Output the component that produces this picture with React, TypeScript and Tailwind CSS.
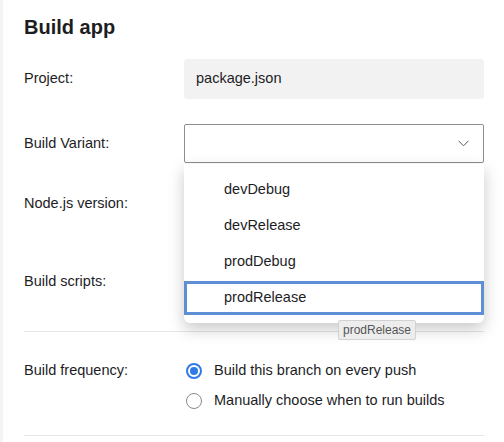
const variants = ["devDebug", "devRelease", "prodDebug", "prodRelease"];

function Row({ label, children, className }: { label: string; children?: React.ReactNode; className?: string }) {
  return (
    <div className={`flex items-center h-10 ${className ?? ""}`}>
      <div className="w-[160px] text-[14.5px] text-[#1d1d1f]">{label}</div>
      <div className="w-[300px] h-full">{children}</div>
    </div>
  );
}

function Radio({ checked, label }: { checked?: boolean; label: string }) {
  return (
    <div className="flex items-center h-[30px]">
      {checked ? (
        <span className="w-4 h-4 rounded-full border-2 border-[#2f7ae5] bg-white flex items-center justify-center ml-[2px]">
          <span className="w-2 h-2 rounded-full bg-[#2f7ae5]" />
        </span>
      ) : (
        <span className="w-4 h-4 rounded-full border border-[#8a8a8a] bg-white ml-[2px]" />
      )}
      <span className="ml-3 text-[14.5px] text-[#1d1d1f]">{label}</span>
    </div>
  );
}

export default function App() {
  return (
    <div
      className="relative w-[504px] h-[442px] overflow-hidden bg-white flex"
      style={{ fontFamily: '"Liberation Sans", Arial, sans-serif' }}
    >
      <div className="w-[3px] h-full bg-[#f4f4f4]" />
      <div className="flex-1 pl-[21px] pr-5 pt-[13px]">
        <h1 className="h-7 flex items-center text-[20px] font-bold text-[#1d1d1f]">Build app</h1>

        <Row label="Project:" className="mt-[18px]">
          <div className="h-full rounded-[3px] bg-[#f2f2f2] flex items-center pl-3 text-[14.5px] text-[#1d1d1f]">
            package.json
          </div>
        </Row>

        <Row label="Build Variant:" className="mt-[25px]">
          <div className="h-[39px] rounded-[2px] border border-[#8e8e8e] bg-white flex items-center justify-end pr-[14px]">
            <svg width="11" height="7" viewBox="0 0 11 7" fill="none">
              <path d="M0.5 0.8 L5.5 5.8 L10.5 0.8" stroke="#5a5a5a" strokeWidth="1" />
            </svg>
          </div>
        </Row>

        <Row label="Node.js version:" className="mt-5" />
        <Row label="Build scripts:" className="mt-[38px]" />

        <div className="mt-[29px] border-t border-[#e6e6e6]" />

        <div className="flex pt-6">
          <div className="w-[160px] h-[30px] flex items-center text-[14.5px] text-[#1d1d1f]">Build frequency:</div>
          <div className="flex flex-col">
            <Radio checked label="Build this branch on every push" />
            <Radio label="Manually choose when to run builds" />
          </div>
        </div>

        <div className="mt-[19px] border-t border-[#e6e6e6]" />
      </div>

      {/* open select menu */}
      <div className="absolute left-[184px] top-[164px] w-[300px] h-[159px] bg-white rounded-b-[6px] shadow-[0_6px_16px_rgba(0,0,0,0.22)] pt-2">
        {variants.map((v) => (
          <div
            key={v}
            className={`h-9 flex items-center pl-[37px] text-[14.5px] text-[#1d1d1f] border-[3px] ${
              v === "prodRelease" ? "border-[#5e8ed6] h-[34px] mt-[1px]" : "border-transparent"
            }`}
          >
            {v}
          </div>
        ))}
      </div>

      <div className="absolute left-[338px] top-[320px] h-5 px-[4px] flex items-center bg-[#ededed] border border-[#d2d2d2] rounded-[2px] text-[12px] text-[#555]">
        prodRelease
      </div>
    </div>
  );
}
